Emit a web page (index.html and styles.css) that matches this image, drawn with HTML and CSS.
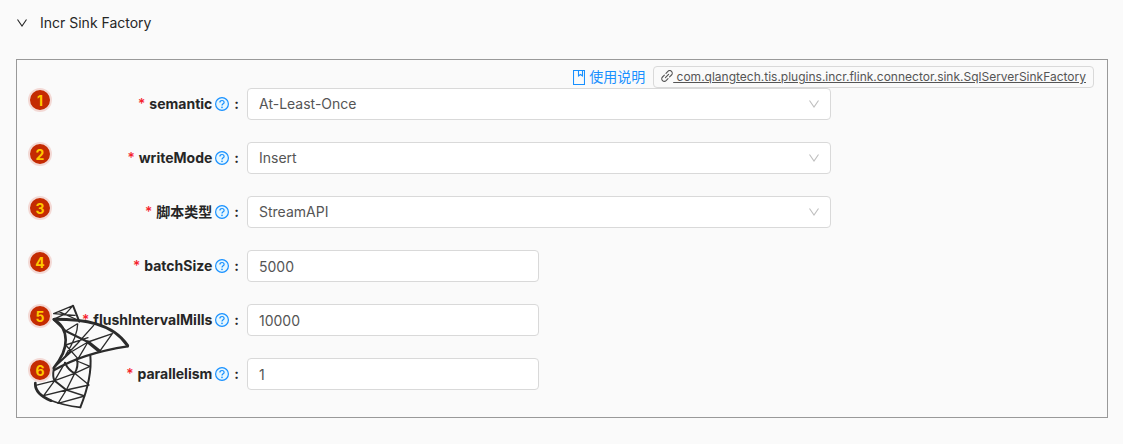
FILE: index.html
```html
<!DOCTYPE html>
<html lang="zh">
<head>
    <meta charset="UTF-8">
    <meta name="viewport" content="width=device-width, initial-scale=1.0">
    <title>Incr Sink Factory</title>
    <link rel="stylesheet" href="styles.css">
</head>
<body>
    <!-- Shared icons -->
    <svg class="icon-defs" aria-hidden="true">
        <symbol id="icon-down" viewBox="0 0 12 12">
            <path d="M1.5 2.5 L6 9 L10.5 2.5" fill="none" stroke="currentColor" stroke-width="1.1"/>
        </symbol>
        <symbol id="icon-help" viewBox="0 0 14 14">
            <circle cx="7" cy="7" r="6.4" fill="#e6f7ff" stroke="currentColor" stroke-width="1.2"/>
            <path d="M4.9 5.6 C4.9 4.2 5.8 3.5 7 3.5 C8.2 3.5 9.1 4.3 9.1 5.4 C9.1 6.9 7 6.8 7 8.6" fill="none" stroke="currentColor" stroke-width="1.2"/>
            <circle cx="7" cy="10.4" r="0.8" fill="currentColor"/>
        </symbol>
    </svg>

    <main class="collapse">
        <button class="collapse-header" type="button" aria-expanded="true">
            <svg class="collapse-arrow"><use href="#icon-down"/></svg>
            <span>Incr Sink Factory</span>
        </button>

        <form class="panel">
            <svg class="logo" viewBox="40 42 294 315" aria-hidden="true">
                <g fill="none" stroke="#2b2b2b" stroke-linecap="round" stroke-linejoin="round">
                    <path stroke-width="4" d="M102 71 L160 47 M102 71 L166 76 M118 65 L174 90 M160 47 L139 70 L102 88"/>
                    <path stroke-width="6" d="M160 47 L179 95"/>
                    <path stroke-width="8" d="M102 88 C122 98 137 120 138 150 C139 185 120 212 102 234"/>
                    <path stroke-width="4" d="M102 234 L172 162 L222 106 M102 234 L154 186 L205 156 L278 131 M138 123 L172 102 M138 165 L205 143 M174 102 C174 130 160 160 138 195 M138 165 L174 205 M278 131 L240 184 M205 156 L176 205 M118 215 L154 186"/>
                    <path stroke-width="6" d="M104 91 L138 123 L205 156"/>
                    <path stroke-width="10" d="M205 156 L240 184"/>
                    <path stroke-width="9" d="M104 88 C190 88 278 98 324 167"/>
                    <path stroke-width="7" d="M324 169 C245 181 165 204 104 240"/>
                    <path stroke-width="4" d="M105 272 L165 250 L211 229 M165 250 L208 285 M115 340 L140 300 L165 250 M140 300 L195 318 M48 286 L105 272 L72 317 L140 300 L208 285 M115 340 L195 318 M136 218 L105 272 M172 213 L211 229"/>
                    <path stroke-width="6" d="M136 218 Q145 240 165 250 Q177 230 172 207 M212 197 C216 240 205 295 182 352 M102 238 Q98 262 105 272 L140 300"/>
                    <path stroke-width="5" d="M182 352 C145 348 120 342 90 330"/>
                    <path stroke-width="8" d="M47 279 C45 302 65 320 94 332"/>
                </g>
            </svg>

            <div class="toolbar">
                <a class="doc-link" href="#">
                    <svg class="doc-icon" viewBox="0 0 12 15"><path d="M0.5 0.5 H11.5 V14.5 H0.5 Z M5.5 0.5 V6 L7.5 4.5 L9.5 6 V0.5" fill="none" stroke="currentColor" stroke-width="1.1"/></svg>
                    <span>使用说明</span>
                </a>
                <a class="class-tag" href="#"><svg class="link-icon" viewBox="0 0 12 12"><g fill="none" stroke="currentColor" stroke-width="1.1" stroke-linecap="round"><path d="M5 3.3 L6.9 1.4 A2.2 2.2 0 0 1 10.5 5 L8.6 6.9 M7 8.7 L5.1 10.6 A2.2 2.2 0 0 1 1.5 7 L3.4 5.1 M4.4 7.6 L7.6 4.4"/></g></svg> com.qlangtech.tis.plugins.incr.flink.connector.sink.SqlServerSinkFactory</a>
            </div>

            <div class="form-item">
                <span class="badge">1</span>
                <div class="form-label">
                    <label for="semantic">semantic</label>
                    <button class="help" type="button" aria-label="semantic help"><svg><use href="#icon-help"/></svg></button>
                </div>
                <div class="form-control">
                    <select id="semantic"><option>At-Least-Once</option></select>
                    <svg class="select-arrow"><use href="#icon-down"/></svg>
                </div>
            </div>

            <div class="form-item">
                <span class="badge">2</span>
                <div class="form-label">
                    <label for="writeMode">writeMode</label>
                    <button class="help" type="button" aria-label="writeMode help"><svg><use href="#icon-help"/></svg></button>
                </div>
                <div class="form-control">
                    <select id="writeMode"><option>Insert</option></select>
                    <svg class="select-arrow"><use href="#icon-down"/></svg>
                </div>
            </div>

            <div class="form-item">
                <span class="badge">3</span>
                <div class="form-label">
                    <label for="scriptType">脚本类型</label>
                    <button class="help" type="button" aria-label="脚本类型 help"><svg><use href="#icon-help"/></svg></button>
                </div>
                <div class="form-control">
                    <select id="scriptType"><option>StreamAPI</option></select>
                    <svg class="select-arrow"><use href="#icon-down"/></svg>
                </div>
            </div>

            <div class="form-item">
                <span class="badge">4</span>
                <div class="form-label">
                    <label for="batchSize">batchSize</label>
                    <button class="help" type="button" aria-label="batchSize help"><svg><use href="#icon-help"/></svg></button>
                </div>
                <div class="form-control">
                    <input type="text" id="batchSize" value="5000">
                </div>
            </div>

            <div class="form-item">
                <span class="badge">5</span>
                <div class="form-label">
                    <label for="flushIntervalMills">flushIntervalMills</label>
                    <button class="help" type="button" aria-label="flushIntervalMills help"><svg><use href="#icon-help"/></svg></button>
                </div>
                <div class="form-control">
                    <input type="text" id="flushIntervalMills" value="10000">
                </div>
            </div>

            <div class="form-item">
                <span class="badge">6</span>
                <div class="form-label">
                    <label for="parallelism">parallelism</label>
                    <button class="help" type="button" aria-label="parallelism help"><svg><use href="#icon-help"/></svg></button>
                </div>
                <div class="form-control">
                    <input type="text" id="parallelism" value="1">
                </div>
            </div>
        </form>
    </main>
</body>
</html>
```

FILE: styles.css
```css
* {
    margin: 0;
    padding: 0;
    box-sizing: border-box;
}
body {
    background-color: #fafafa;
    color: #262626;
    font-family: Inter, "Noto Sans CJK SC", sans-serif;
    font-size: 14px;
    line-height: 22px;
}
button, input, select {
    font: inherit;
    color: inherit;
}
.icon-defs {
    position: absolute;
    width: 0;
    height: 0;
}
.collapse {
    padding: 12px 15px 26px 16px;
}
.collapse-header {
    display: flex;
    align-items: center;
    gap: 12px;
    width: 100%;
    margin-bottom: 25px;
    background: none;
    border: none;
    cursor: pointer;
}
.collapse-arrow {
    width: 12px;
    height: 12px;
}

/* Panel */
.panel {
    position: relative;
    padding: 6px 13px 5px 11px;
    border: 1px solid #999;
}
.logo {
    position: absolute;
    left: 16px;
    bottom: 8px;
    width: 98px;
    height: 105px;
}
.toolbar {
    display: flex;
    justify-content: flex-end;
    align-items: center;
    gap: 8px;
    height: 22px;
}
.doc-link {
    display: flex;
    align-items: center;
    gap: 4px;
    color: #1890ff;
    text-decoration: none;
}
.doc-icon {
    width: 12px;
    height: 15px;
}
.class-tag {
    padding: 0 7px;
    border: 1px solid #d9d9d9;
    border-radius: 4px;
    color: #555;
    font-size: 12px;
    line-height: 20px;
}
.link-icon {
    width: 12px;
    height: 12px;
    vertical-align: -1px;
}

/* Form rows */
.form-item {
    position: relative;
    display: flex;
    margin-bottom: 22px;
}
.badge {
    flex: none;
    width: 24px;
    height: 24px;
    border: 2px solid #f3d9d5;
    border-radius: 50%;
    background-color: #c42b02;
    color: #ffc800;
    font-weight: 700;
    line-height: 22px;
    text-align: center;
}
.form-label {
    flex: none;
    display: flex;
    justify-content: flex-end;
    align-items: center;
    gap: 3px;
    width: 195px;
    padding-right: 8px;
    font-weight: 700;
}
.form-label::after {
    content: ":";
    margin-left: 2px;
}
.form-label label::before {
    content: "*";
    margin-right: 4px;
    color: #f5222d;
    font-weight: 500;
}
.help {
    display: flex;
    background: none;
    border: none;
    color: #1890ff;
    cursor: pointer;
}
.help svg {
    width: 14px;
    height: 14px;
}
.form-control {
    position: relative;
    flex: 0 0 calc(55% - 2px);
    color: #555;
}
.form-control select, .form-control input {
    display: block;
    height: 32px;
    padding: 4px 11px;
    border: 1px solid #d9d9d9;
    border-radius: 4px;
    background-color: #fff;
}
.form-control select {
    width: 100%;
    appearance: none;
}
.form-control input {
    width: 50%;
}
.select-arrow {
    position: absolute;
    top: 10px;
    right: 11px;
    width: 12px;
    height: 12px;
    color: #bfbfbf;
    pointer-events: none;
}
```
